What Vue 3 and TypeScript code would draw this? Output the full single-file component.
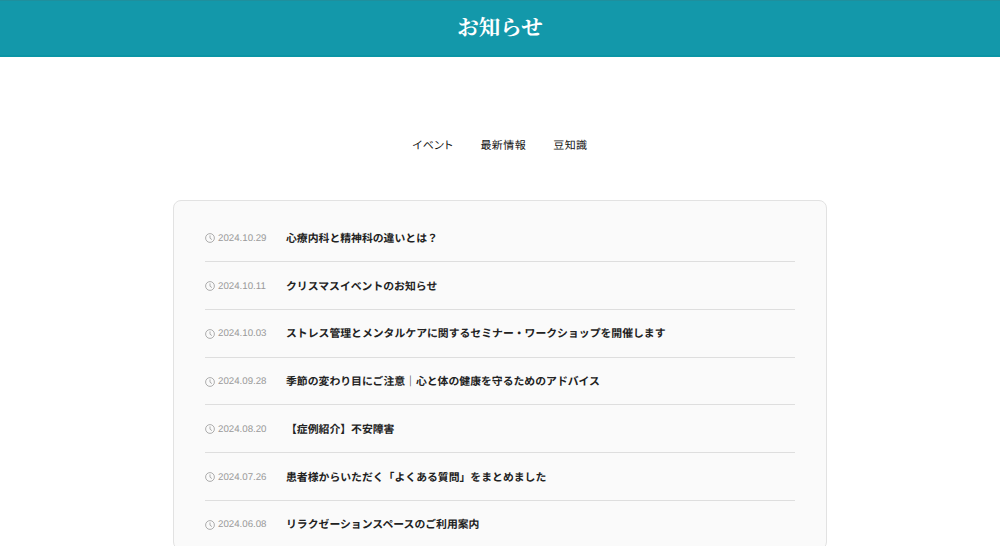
<script setup lang="ts">
const tabs: string[] = ['イベント', '最新情報', '豆知識']
const items: { date: string; title: string }[] = [
  { date: '2024.10.29', title: '心療内科と精神科の違いとは？' },
  { date: '2024.10.11', title: 'クリスマスイベントのお知らせ' },
  { date: '2024.10.03', title: 'ストレス管理とメンタルケアに関するセミナー・ワークショップを開催します' },
  { date: '2024.09.28', title: '季節の変わり目にご注意｜心と体の健康を守るためのアドバイス' },
  { date: '2024.08.20', title: '【症例紹介】不安障害' },
  { date: '2024.07.26', title: '患者様からいただく「よくある質問」をまとめました' },
  { date: '2024.06.08', title: 'リラクゼーションスペースのご利用案内' },
]
</script>

<template>
  <div class="page">
    <header class="hero"><h1>お知らせ</h1></header>
    <nav class="tabs">
      <a v-for="t in tabs" :key="t">{{ t }}</a>
    </nav>
    <section class="card">
      <div v-for="item in items" :key="item.date" class="row">
        <span class="date">
          <svg width="10" height="10" viewBox="0 0 10 10" fill="none" stroke="#999" stroke-width="0.8">
            <circle cx="5" cy="5" r="4.4" />
            <path d="M5 2.4V5.2L6.9 6.6" />
          </svg>
          {{ item.date }}
        </span>
        <span class="title">{{ item.title }}</span>
      </div>
    </section>
  </div>
</template>

<style>
html, body { margin: 0; background: #fff; overflow: hidden; }
</style>

<style scoped>
.page { height: 546px; overflow: hidden; font-family: "Liberation Sans", "Noto Sans CJK JP", sans-serif; color: #222; text-rendering: geometricPrecision; }
.hero { height: 57px; background: #1398aa; box-sizing: border-box; border-top: 1px solid #1f8f9d; border-bottom: 2px solid #0b95a5; padding-bottom: 3px; display: flex; align-items: center; justify-content: center; }
.hero h1 { margin: 0; font-family: "Noto Serif CJK JP", "Liberation Serif", "Noto Sans CJK JP", serif; font-size: 21.5px; line-height: 28px; font-weight: 700; color: #fff; }
.tabs { display: flex; justify-content: center; gap: 27px; padding-top: 80px; font-size: 11px; line-height: 19px; font-weight: 400; font-feature-settings: "palt"; letter-spacing: 0.45px; color: #111; }
.card { width: 654px; box-sizing: border-box; margin: 44px auto 0; padding: 13.4px 31px 0; background: #fafafa; border: 1px solid #e2e2e2; border-radius: 8px; }
.row { display: flex; align-items: center; box-sizing: border-box; height: 47.75px; padding-top: 1.4px; border-bottom: 1px solid #dedede; }
.date { width: 81px; flex: none; display: flex; align-items: center; gap: 3px; font-size: 9.7px; color: #999; }
.title { font-size: 10.85px; line-height: 14px; margin-top: 1px; font-weight: 700; color: #222; }
</style>
